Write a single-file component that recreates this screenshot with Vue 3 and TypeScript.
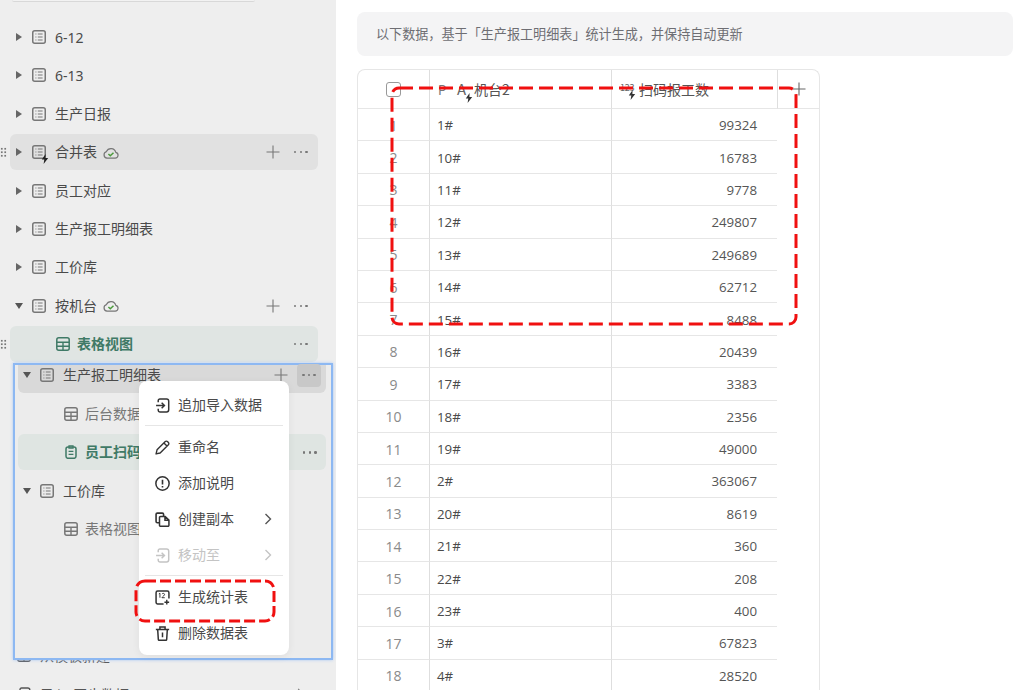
<template>
  <div class="page">
    <!-- icon sprites -->
    <svg class="sprites" width="0" height="0" aria-hidden="true">
      <symbol id="i-list" viewBox="0 0 14 14">
        <rect x="0.75" y="0.75" width="12.5" height="12.5" rx="2" fill="none" stroke="currentColor" stroke-width="1.5" />
        <path d="M3.4 4h1M3.4 7h1M3.4 10h1M5.8 4h4.8M5.8 7h4.8M5.8 10h4.8" fill="none" stroke="currentColor" stroke-width="1.100" />
      </symbol>
      <symbol id="i-grid" viewBox="0 0 14 14">
        <rect x="0.8" y="0.8" width="12.4" height="12.4" rx="2" fill="none" stroke="currentColor" stroke-width="1.5" />
        <path d="M0.8 5.2h12.4M0.8 9.2h12.4M7 5.2v8" fill="none" stroke="currentColor" stroke-width="1.4" />
      </symbol>
      <symbol id="i-form" viewBox="0 0 14 14">
        <rect x="2" y="2" width="10" height="11.3" rx="2" fill="none" stroke="currentColor" stroke-width="1.5" />
        <path d="M5 .9h4v2.2H5zM4.6 6.4h4.8M4.6 9.4h4.8" fill="none" stroke="currentColor" stroke-width="1.3" />
      </symbol>
      <symbol id="i-cloud" viewBox="0 0 16 12">
        <path d="M4 11.2h8.2a3 3 0 0 0 .6-5.900A5 5 0 0 0 3.400 4.600 3.400 3.400 0 0 0 4 11.200z" fill="none" stroke="#777" stroke-width="1.200" />
        <path d="M5.400 7l1.900 1.800 3.200-3.100" fill="none" stroke="#4c9a3c" stroke-width="1.500" />
      </symbol>
      <symbol id="i-plus" viewBox="0 0 14 14">
        <path d="M7 .5v13M.5 7h13" fill="none" stroke="currentColor" stroke-width="1.100" />
      </symbol>
      <symbol id="i-bolt" viewBox="0 0 8 10">
        <path d="M4.600 0 .8 5.400h2.500L2.600 10l4.600-6H4.400z" fill="currentColor" />
      </symbol>
      <symbol id="i-import" viewBox="0 0 14 14">
        <path d="M3 4V2.500A1.500 1.500 0 0 1 4.500 1h6.300a2 2 0 0 1 2 2v8a2 2 0 0 1-2 2H4.500A1.500 1.500 0 0 1 3 11.500V10" fill="none" stroke="currentColor" stroke-width="1.400" />
        <path d="M1 7h7.500M6.200 4.500 8.800 7l-2.600 2.500" fill="none" stroke="currentColor" stroke-width="1.400" />
      </symbol>
      <symbol id="i-pen" viewBox="0 0 14 14">
        <path d="M1 13l.9-3.800L9.600 1.500a1.400 1.400 0 0 1 2 0l.9.900a1.400 1.400 0 0 1 0 2L4.800 12.100zM8.300 2.800l2.900 2.900" fill="none" stroke="currentColor" stroke-width="1.300" stroke-linejoin="round" />
      </symbol>
      <symbol id="i-info" viewBox="0 0 14 14">
        <circle cx="7" cy="7" r="6.200" fill="none" stroke="currentColor" stroke-width="1.400" />
        <path d="M7 3.400v4.600M7 9.400v1.300" fill="none" stroke="currentColor" stroke-width="1.500" />
      </symbol>
      <symbol id="i-copy" viewBox="0 0 14 14">
        <path d="M4 10H2.200A1.200 1.200 0 0 1 1 8.800V2.200A1.200 1.200 0 0 1 2.200 1h4.600A1.200 1.200 0 0 1 8 2.200V4" fill="none" stroke="currentColor" stroke-width="1.500" />
        <path d="M5.200 4.200h4.300L13 7.600v4.800a1 1 0 0 1-1 1H5.200a1 1 0 0 1-1-1V5.200a1 1 0 0 1 1-1zM9.300 4.400v3.300H13" fill="none" stroke="currentColor" stroke-width="1.400" />
      </symbol>
      <symbol id="i-stat" viewBox="0 0 14 14">
        <path d="M8 13H2.500A1.500 1.500 0 0 1 1 11.500v-9A1.500 1.500 0 0 1 2.500 1h9A1.500 1.500 0 0 1 13 2.500V8" fill="none" stroke="currentColor" stroke-width="1.400" />
        <path d="M11 9.200v4.400M8.800 11.400h4.400" fill="none" stroke="currentColor" stroke-width="1.300" />
        <path d="M3.600 3.600l1-.6v4.200M6.500 3.800c.4-.9 2.300-.9 2.400.3.100.9-1.700 1.800-2.400 3.100h2.600" fill="none" stroke="currentColor" stroke-width=".9" />
      </symbol>
      <symbol id="i-trash" viewBox="0 0 14 14">
        <path d="M.8 3.200h12.400M4.600 3V1h4.800v2M2.500 3.200l.6 9.300a1 1 0 0 0 1 .9h5.800a1 1 0 0 0 1-.9l.6-9.300M7 6v4.500" fill="none" stroke="currentColor" stroke-width="1.400" />
      </symbol>
    </svg>

    <!-- left tree -->
    <aside class="sidebar">
      <div class="search-edge"></div>
      <ul class="tree">
        <li v-for="row in treeRows" :key="row.name" class="row" :class="row.cls">
          <span v-if="row.drag" class="drag"></span>
          <span v-if="row.arrow" class="arrow" :class="{ open: row.arrow === 'open' }"></span>
          <svg class="ico" :class="{ view: row.icon === 'grid' }"><use :href="'#i-' + row.icon" /></svg>
          <svg v-if="row.bolt" class="bolt"><use href="#i-bolt" /></svg>
          <span class="name">{{ row.name }}</span>
          <svg v-if="row.cloud" class="cloud"><use href="#i-cloud" /></svg>
          <span class="spacer"></span>
          <svg v-if="row.plus" class="plus"><use href="#i-plus" /></svg>
          <span v-if="row.more" class="more"><i></i><i></i><i></i></span>
        </li>
      </ul>
      <div class="foot">
        <div class="foot-row">
          <svg class="foot-ico"><use href="#i-grid" /></svg>
          <span>从模板新建</span>
        </div>
        <div class="foot-row">
          <svg class="foot-ico"><use href="#i-import" /></svg>
          <span>导入/同步数据</span>
          <span class="foot-chev"></span>
        </div>
      </div>
    </aside>

    <!-- right content -->
    <main class="content">
      <div class="banner">以下数据，基于「生产报工明细表」统计生成，并保持自动更新</div>
      <div class="table">
        <div class="thead">
          <div class="cell num"><span class="checkbox"></span></div>
          <div class="cell th">
            <span class="tag-p">P</span>
            <span class="tag-a">A<svg class="tag-bolt"><use href="#i-bolt" /></svg></span>
            <span>机台2</span>
          </div>
          <div class="cell th">
            <span class="tag-n">123<svg class="tag-bolt"><use href="#i-bolt" /></svg></span>
            <span>扫码报工数</span>
          </div>
          <div class="cell add"><svg class="add-ico"><use href="#i-plus" /></svg></div>
        </div>
        <div v-for="(r, i) in tableRows" :key="r[0]" class="tr">
          <div class="cell num">{{ i + 1 }}</div>
          <div class="cell">{{ r[0] }}</div>
          <div class="cell val">{{ r[1] }}</div>
        </div>
      </div>
    </main>

    <!-- pasted selection over the tree -->
    <section class="pasted">
      <div class="p-row first">
        <span class="arrow open"></span>
        <svg class="ico"><use href="#i-list" /></svg>
        <span class="name">生产报工明细表</span>
        <span class="spacer"></span>
        <svg class="plus"><use href="#i-plus" /></svg>
        <span class="more boxed"><i></i><i></i><i></i></span>
      </div>
      <div class="p-row child">
        <svg class="ico"><use href="#i-grid" /></svg>
        <span class="name muted">后台数据</span>
      </div>
      <div class="p-row child active">
        <svg class="ico"><use href="#i-form" /></svg>
        <span class="name">员工扫码</span>
        <span class="spacer"></span>
        <span class="more"><i></i><i></i><i></i></span>
      </div>
      <div class="p-row">
        <span class="arrow open"></span>
        <svg class="ico"><use href="#i-list" /></svg>
        <span class="name">工价库</span>
      </div>
      <div class="p-row child">
        <svg class="ico"><use href="#i-grid" /></svg>
        <span class="name muted">表格视图</span>
      </div>
    </section>

    <!-- context menu -->
    <div class="menu">
      <template v-for="item in menuItems" :key="item.label">
        <div v-if="item.divider" class="divider"></div>
        <div class="menu-item" :class="{ disabled: item.disabled }">
          <svg class="menu-ico"><use :href="'#i-' + item.icon" /></svg>
          <span class="menu-label">{{ item.label }}</span>
          <svg v-if="item.chevron" class="chev" viewBox="0 0 8 12"><path d="M1.500 1l5 5-5 5" fill="none" stroke="currentColor" stroke-width="1.400" /></svg>
        </div>
      </template>
    </div>

    <!-- red annotations -->
    <svg class="mark mark-table" width="408" height="240">
      <rect x="2" y="2" width="404" height="236" rx="7" fill="none" stroke="#f01010" stroke-width="3" stroke-dasharray="14 6" />
    </svg>
    <svg class="mark mark-menu" width="142" height="44">
      <rect x="2" y="2" width="138" height="40" rx="9" fill="none" stroke="#f01010" stroke-width="3" stroke-dasharray="11 4" />
    </svg>
  </div>
</template>

<script setup lang="ts">
interface TreeRow {
  name: string
  icon: string
  arrow?: 'open' | 'closed'
  cls?: string
  cloud?: boolean
  plus?: boolean
  more?: boolean
  drag?: boolean
  bolt?: boolean
}

const treeRows: TreeRow[] = [
  { name: '6-12', icon: 'list', arrow: 'closed' },
  { name: '6-13', icon: 'list', arrow: 'closed' },
  { name: '生产日报', icon: 'list', arrow: 'closed' },
  { name: '合并表', icon: 'list', arrow: 'closed', cls: 'hover', cloud: true, plus: true, more: true, drag: true, bolt: true },
  { name: '员工对应', icon: 'list', arrow: 'closed' },
  { name: '生产报工明细表', icon: 'list', arrow: 'closed' },
  { name: '工价库', icon: 'list', arrow: 'closed' },
  { name: '按机台', icon: 'list', arrow: 'open', cloud: true, plus: true, more: true },
  { name: '表格视图', icon: 'grid', cls: 'current', more: true, drag: true },
]

const tableRows: [string, number][] = [
  ['1#', 99324],
  ['10#', 16783],
  ['11#', 9778],
  ['12#', 249807],
  ['13#', 249689],
  ['14#', 62712],
  ['15#', 8488],
  ['16#', 20439],
  ['17#', 3383],
  ['18#', 2356],
  ['19#', 49000],
  ['2#', 363067],
  ['20#', 8619],
  ['21#', 360],
  ['22#', 208],
  ['23#', 400],
  ['3#', 67823],
  ['4#', 28520],
]

const menuItems = [
  { label: '追加导入数据', icon: 'import' },
  { label: '重命名', icon: 'pen', divider: true },
  { label: '添加说明', icon: 'info' },
  { label: '创建副本', icon: 'copy', chevron: true },
  { label: '移动至', icon: 'import', chevron: true, disabled: true },
  { label: '生成统计表', icon: 'stat', divider: true },
  { label: '删除数据表', icon: 'trash' },
]
</script>

<style>
html,
body {
  margin: 0;
  background: #fff;
  overflow: hidden;
}
</style>

<style scoped>
.page {
  position: relative;
  width: 1024px;
  height: 690px;
  overflow: hidden;
  display: flex;
  font-family: "Noto Sans", "Noto Sans CJK SC", sans-serif;
  font-size: 14px;
  color: #4a4a4a;
}

.sprites {
  position: absolute;
}

/* Sidebar */
.sidebar {
  width: 336px;
  flex: none;
  background: #eeeeee;
}

.search-edge {
  height: 1px;
  width: 243px;
  margin-left: 12px;
  background: #f2f2f2;
  border-bottom: 1px solid #d8d8d8;
  border-radius: 0 0 6px 6px;
}

.tree {
  list-style: none;
  margin: 0;
  padding: 17px 18px 0 10px;
  display: flex;
  flex-direction: column;
  gap: 2.4px;
}

.row {
  position: relative;
  height: 36px;
  display: flex;
  align-items: center;
  padding: 0 9px 0 6px;
  border-radius: 6px;
}

.row:nth-child(-n + 2) .name {
  margin-top: 0;
}

.row.hover {
  background: #e1e1e1;
}

.row.current {
  background: #e0e5e3;
}

.row.current .name {
  color: #3f7a66;
  font-weight: 700;
}

.drag {
  position: absolute;
  left: -10px;
  top: 13px;
  width: 7px;
  height: 10px;
  background-image: radial-gradient(circle, #777 0.9px, transparent 1px);
  background-size: 3.5px 3.5px;
}

.arrow {
  width: 0;
  height: 0;
  flex: none;
  margin-right: 10px;
  border-left: 6px solid #666;
  border-top: 4px solid transparent;
  border-bottom: 4px solid transparent;
}

.arrow.open {
  border-left: 4px solid transparent;
  border-right: 4px solid transparent;
  border-top: 6px solid #555;
  border-bottom: none;
  margin-left: -1px;
  margin-right: 9px;
}

.ico {
  width: 14px;
  height: 14px;
  flex: none;
  color: #777;
}

.ico.view {
  color: #3f7a66;
  margin-left: 40px;
  margin-right: -2px;
}

.bolt {
  position: absolute;
  left: 31px;
  top: 20px;
  width: 8px;
  height: 10px;
  color: #222;
}

.name {
  margin-left: 9px;
  margin-top: -2px;
  white-space: nowrap;
}

.cloud {
  width: 16px;
  height: 12px;
  margin-left: 6px;
  margin-top: 1px;
  flex: none;
}

.spacer {
  flex: 1;
}

.plus {
  width: 14px;
  height: 14px;
  color: #777;
  flex: none;
  margin-right: 14px;
}

.more {
  display: flex;
  gap: 3.2px;
  width: 15px;
  flex: none;
}

.more i {
  width: 2.4px;
  height: 2.4px;
  border-radius: 50%;
  background: #777;
}

.foot {
  margin-top: 275px;
  padding-left: 17px;
  color: #555;
}

.foot-row {
  position: relative;
  height: 36px;
  margin-bottom: 2.4px;
  width: 287px;
  display: flex;
  align-items: center;
  gap: 9px;
  white-space: nowrap;
}

.foot-ico {
  width: 14px;
  height: 14px;
  flex: none;
  color: #555;
}

.foot-chev {
  position: absolute;
  right: 2px;
  top: 14px;
  width: 6px;
  height: 6px;
  border-top: 1.3px solid #777;
  border-right: 1.3px solid #777;
  transform: rotate(45deg);
}

/* Right side */
.content {
  flex: 1;
  padding: 12px 11px 0 21px;
}

.banner {
  height: 44px;
  line-height: 44px;
  padding-left: 19px;
  background: #f4f4f5;
  border-radius: 8px;
  font-size: 13.1px;
  color: #6e6e73;
}

.table {
  width: 463px;
  margin-top: 13px;
  border: 1px solid #e6e6e6;
  border-bottom: none;
  border-radius: 8px 8px 0 0;
  box-sizing: border-box;
}

.thead,
.tr {
  display: grid;
  grid-template-columns: 71px 182px 166px 42px;
}

.thead {
  height: 39px;
}

.tr {
  height: 32.4px;
}

.cell {
  display: flex;
  align-items: center;
  padding: 1px 0 0 7px;
  border-left: 1px solid #dedede;
  border-bottom: 1px solid #e6e6e6;
  box-sizing: border-box;
  font-size: 13.3px;
  font-family: "Open Sans", "Noto Sans CJK SC", sans-serif;
  color: #4a4a4a;
}

.cell.num {
  border-left: none;
  padding: 1px 0 0 0;
  justify-content: center;
  color: #8a8a8a;
  font-size: 14px;
}

.cell.val {
  justify-content: flex-end;
  padding-right: 20px;
  color: #555;
}

.cell.add {
  justify-content: center;
  padding: 0;
  color: #666;
}

.th {
  padding: 0 0 0 8px;
  font-size: 14px;
  font-family: "Noto Sans CJK SC", "Noto Sans", sans-serif;
  color: #555;
}

.thead .cell.num {
  padding: 0;
}

.checkbox {
  width: 13px;
  height: 13px;
  border: 1px solid #999;
  border-radius: 3px;
}

.tag-p {
  width: 19px;
  font-size: 13px;
  color: #777;
}

.tag-a {
  position: relative;
  width: 17px;
  font-size: 15px;
  line-height: 16px;
  color: #666;
}

.tag-n {
  position: relative;
  width: 19px;
  font-size: 9px;
  letter-spacing: -0.3px;
  color: #666;
  margin-bottom: 4px;
}

.tag-bolt {
  position: absolute;
  left: 8px;
  bottom: -6px;
  width: 8px;
  height: 10px;
  color: #333;
}

.add-ico {
  width: 14px;
  height: 14px;
}

/* Pasted selection box */
.pasted {
  position: absolute;
  left: 13px;
  top: 363px;
  width: 320px;
  height: 297px;
  box-sizing: border-box;
  padding: 0 5px 0 3px;
  background: #ececec;
  border: 2px solid #8db8f2;
  box-shadow: 0 0 3px #a9c9f5;
  display: flex;
  flex-direction: column;
  gap: 2.4px;
}

.p-row {
  height: 36px;
  flex: none;
  display: flex;
  align-items: center;
  padding: 0 8px 0 6px;
  border-radius: 6px;
}

.p-row.first {
  height: 28px;
  margin-bottom: 0.6px;
  background: #d9d9d9;
  border-radius: 0 0 6px 6px;
  padding: 0 5px 8px 6px;
  box-sizing: border-box;
}

.p-row.child {
  padding-left: 46px;
}

.p-row.child .ico {
  color: #777;
}

.p-row.child .name {
  margin-left: 7px;
}

.p-row.active {
  background: #dfe5e2;
}

.p-row.active .ico {
  color: #3f7a66;
}

.p-row.active .name {
  color: #3f7a66;
  font-weight: 700;
}

.name.muted {
  color: #777;
}

.p-row .plus {
  margin-right: 9px;
}

.more.boxed {
  width: 24px;
  height: 23px;
  background: #c8c8c8;
  border-radius: 4px;
  align-items: center;
  justify-content: center;
}

/* Context menu */
.menu {
  position: absolute;
  left: 139px;
  top: 381px;
  width: 150px;
  height: 274px;
  box-sizing: border-box;
  padding: 6px 0 4px;
  background: #fff;
  border-radius: 8px;
  box-shadow: 0 2px 8px rgba(0, 0, 0, 0.06);
}

.menu-item {
  position: relative;
  height: 36px;
  display: flex;
  align-items: center;
  padding-left: 16px;
  color: #4a4a4a;
}

.menu-item.disabled {
  color: #c4c4c4;
}

.menu-label {
  margin-top: -2px;
}

.menu-ico {
  width: 15px;
  height: 15px;
  margin-right: 8px;
  flex: none;
  color: #333;
}

.menu-item.disabled .menu-ico {
  color: #c4c4c4;
}

.chev {
  position: absolute;
  left: 125px;
  top: 12px;
  width: 8px;
  height: 12px;
  color: #555;
}

.menu-item.disabled .chev {
  color: #c4c4c4;
}

.divider {
  height: 1px;
  margin: 2px 6px 3px;
  background: #e6e6e6;
}

/* Red dashed annotations */
.mark {
  position: absolute;
  pointer-events: none;
}

.mark-table {
  left: 390px;
  top: 86px;
}

.mark-menu {
  left: 134px;
  top: 579px;
}
</style>
